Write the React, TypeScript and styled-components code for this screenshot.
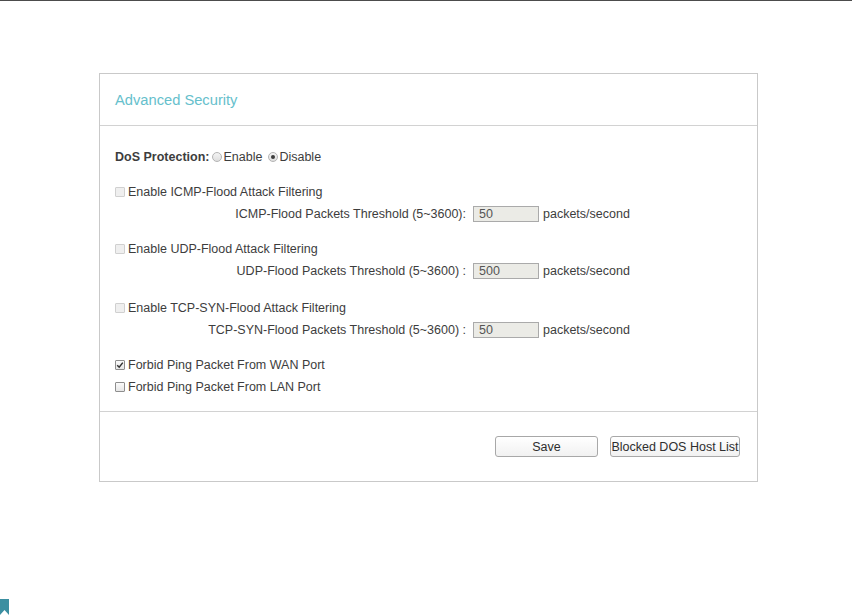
import styled, { createGlobalStyle } from "styled-components";

const GlobalStyle = createGlobalStyle`
  html, body {
    margin: 0;
    padding: 0;
    background: #ffffff;
  }
  body {
    font-family: "Liberation Sans", Arial, sans-serif;
    font-size: 12.5px;
    color: #3d3d3d;
  }
`;

const Page = styled.div`
  display: flex;
  flex-direction: column;
  height: 615px;
  border-top: 1px solid #4c4c4c;
  box-sizing: border-box;
`;

const Panel = styled.section`
  width: 659px;
  margin: 72px 0 0 99px;
  border: 1px solid #c9c9c9;
  box-sizing: border-box;
`;

const Header = styled.header`
  display: flex;
  align-items: center;
  height: 51px;
  padding: 0 15px;
  border-bottom: 1px solid #d2d2d2;
`;

const Title = styled.h2`
  margin: 0;
  font-size: 14.7px;
  font-weight: normal;
  color: #66c0cc;
`;

const Body = styled.div`
  display: flex;
  flex-direction: column;
  gap: 13px;
  padding: 20px 15px 13px;
  border-bottom: 1px solid #d2d2d2;
`;

const Group = styled.div<{ $extra?: number }>`
  display: flex;
  flex-direction: column;
  margin-top: ${({ $extra }) => $extra ?? 0}px;
`;

const Row = styled.div`
  display: flex;
  align-items: center;
  height: 22px;
  white-space: nowrap;
`;

const Strong = styled.span`
  font-weight: bold;
  margin-right: 3px;
`;

const Radio = styled.span<{ $checked?: boolean }>`
  position: relative;
  flex: none;
  width: 10px;
  height: 10px;
  border-radius: 50%;
  border: 1px solid #b4b4b4;
  background: linear-gradient(#f4f4f4, #dedede);
  box-sizing: border-box;
  margin-right: 1px;

  &::after {
    content: "";
    display: ${({ $checked }) => ($checked ? "block" : "none")};
    position: absolute;
    left: 2px;
    top: 2px;
    width: 4px;
    height: 4px;
    border-radius: 50%;
    background: #3c3c3c;
  }
`;

const RadioText = styled.span`
  margin-right: 6px;
`;

const Box = styled.span<{ $disabled?: boolean }>`
  display: grid;
  place-items: center;
  flex: none;
  width: 10px;
  height: 10px;
  margin-right: 3px;
  border: 1px solid ${({ $disabled }) => ($disabled ? "#d0d0d0" : "#8e8e8e")};
  background: ${({ $disabled }) => ($disabled ? "#efefef" : "linear-gradient(#fafafa, #e6e6e6)")};
  border-radius: 1px;
  box-sizing: border-box;
`;

const Threshold = styled.div`
  display: grid;
  grid-template-columns: 358px 66px auto;
  align-items: center;
  height: 22px;
  white-space: nowrap;
`;

const ThresholdLabel = styled.span`
  justify-self: end;
  padding-right: 7px;
`;

const NumberBox = styled.div`
  height: 16px;
  line-height: 14px;
  padding-left: 5px;
  border: 1px solid #aaaaaa;
  background: #ebebe6;
  color: #555555;
  box-sizing: border-box;
`;

const Unit = styled.span`
  margin-left: 4px;
`;

const Footer = styled.footer`
  display: flex;
  justify-content: flex-end;
  align-items: center;
  gap: 12px;
  height: 69px;
  padding-right: 17px;
`;

const Button = styled.button<{ $width: number }>`
  width: ${({ $width }) => $width}px;
  height: 21px;
  padding: 0;
  border: 1px solid #a8a8a8;
  border-radius: 3px;
  background: linear-gradient(#ffffff, #f1f1f1);
  font-family: "Liberation Sans", Arial, sans-serif;
  font-size: 12.5px;
  color: #2e2e2e;
  white-space: nowrap;
  overflow: hidden;
`;

const Bookmark = styled.svg`
  display: block;
  margin-top: auto;
`;

function Check({ label, checked, disabled }: { label: string; checked?: boolean; disabled?: boolean }) {
  return (
    <Row>
      <Box $disabled={disabled}>
        {checked && (
          <svg width="8" height="8" viewBox="0 0 8 8">
            <path d="M1.2 4.2 L3.2 6.2 L6.8 1.6" fill="none" stroke="#333" strokeWidth="1.5" />
          </svg>
        )}
      </Box>
      {label}
    </Row>
  );
}

const floods = [
  { name: "ICMP", label: "ICMP-Flood Packets Threshold (5~3600):", value: "50" },
  { name: "UDP", label: "UDP-Flood Packets Threshold (5~3600) :", value: "500" },
  { name: "TCP-SYN", label: "TCP-SYN-Flood Packets Threshold (5~3600) :", value: "50" },
];

export default function App() {
  return (
    <>
      <GlobalStyle />
      <Page>
        <Panel>
          <Header>
            <Title>Advanced Security</Title>
          </Header>
          <Body>
            <Row>
              <Strong>DoS Protection:</Strong>
              <Radio />
              <RadioText>Enable</RadioText>
              <Radio $checked />
              <RadioText>Disable</RadioText>
            </Row>
            {floods.map((f, i) => (
              <Group key={f.name} $extra={i === 2 ? 2 : 0}>
                <Check label={`Enable ${f.name}-Flood Attack Filtering`} disabled />
                <Threshold>
                  <ThresholdLabel>{f.label}</ThresholdLabel>
                  <NumberBox>{f.value}</NumberBox>
                  <Unit>packets/second</Unit>
                </Threshold>
              </Group>
            ))}
            <Group>
              <Check label="Forbid Ping Packet From WAN Port" checked />
              <Check label="Forbid Ping Packet From LAN Port" />
            </Group>
          </Body>
          <Footer>
            <Button $width={103}>Save</Button>
            <Button $width={130}>Blocked DOS Host List</Button>
          </Footer>
        </Panel>
        <Bookmark width="9" height="16" viewBox="0 0 9 16">
          <polygon points="0,0 9,0 9,16 4.5,11 0,16" fill="#3b8fa1" />
        </Bookmark>
      </Page>
    </>
  );
}
